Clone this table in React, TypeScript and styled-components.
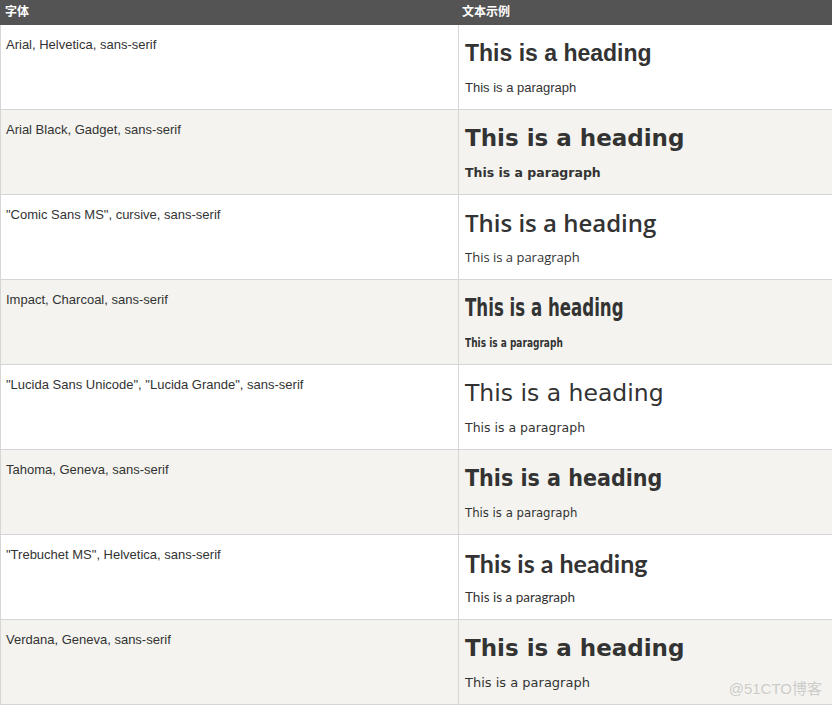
import React from 'react';
import styled, { createGlobalStyle } from 'styled-components';

type FontSample = {
  label: string;
  family: string;
  headSize: number;
  headWeight: number;
  paraSize: number;
  paraWeight: number;
  squeeze?: number;
};

// no Comic Sans / Impact / Tahoma here, so closest installed faces stand in
const SAMPLES: FontSample[] = [
  { label: 'Arial, Helvetica, sans-serif', family: '"Liberation Sans", Arial, sans-serif', headSize: 23, headWeight: 700, paraSize: 13, paraWeight: 400 },
  { label: 'Arial Black, Gadget, sans-serif', family: '"DejaVu Sans", sans-serif', headSize: 23, headWeight: 700, paraSize: 12.5, paraWeight: 700 },
  { label: '"Comic Sans MS", cursive, sans-serif', family: '"Open Sans", sans-serif', headSize: 24, headWeight: 600, paraSize: 13, paraWeight: 400 },
  { label: 'Impact, Charcoal, sans-serif', family: '"DejaVu Sans Condensed", sans-serif', headSize: 24, headWeight: 700, paraSize: 13, paraWeight: 700, squeeze: 0.77 },
  { label: '"Lucida Sans Unicode", "Lucida Grande", sans-serif', family: '"DejaVu Sans", sans-serif', headSize: 23.5, headWeight: 400, paraSize: 12.5, paraWeight: 400 },
  { label: 'Tahoma, Geneva, sans-serif', family: '"DejaVu Sans Condensed", "DejaVu Sans", sans-serif', headSize: 23, headWeight: 700, paraSize: 13, paraWeight: 400 },
  { label: '"Trebuchet MS", Helvetica, sans-serif', family: 'Lato, sans-serif', headSize: 25, headWeight: 700, paraSize: 13.5, paraWeight: 400 },
  { label: 'Verdana, Geneva, sans-serif', family: '"DejaVu Sans", sans-serif', headSize: 23, headWeight: 700, paraSize: 13, paraWeight: 400 },
];

const GlobalStyle = createGlobalStyle`
  html, body {
    margin: 0;
    padding: 0;
    background: #ffffff;
  }
  body {
    font-family: "Liberation Sans", Arial, "Noto Sans CJK SC", sans-serif;
    color: #333333;
  }
`;

const App = () => {
  return (
    <>
      <GlobalStyle />
      <Page>
        <HeaderRow>
          <HeaderCell>字体</HeaderCell>
          <HeaderCell $second>文本示例</HeaderCell>
        </HeaderRow>
        {SAMPLES.map((s, i) => (
          <Row key={s.label} $striped={i % 2 === 1}>
            <NameCell>{s.label}</NameCell>
            <SampleCell>
              <Heading
                $family={s.family}
                $size={s.headSize}
                $weight={s.headWeight}
                $squeeze={s.squeeze ?? 1}
              >
                This is a heading
              </Heading>
              <Paragraph
                $family={s.family}
                $size={s.paraSize}
                $weight={s.paraWeight}
                $squeeze={s.squeeze ?? 1}
              >
                This is a paragraph
              </Paragraph>
            </SampleCell>
          </Row>
        ))}
        <Watermark>@51CTO博客</Watermark>
      </Page>
    </>
  );
};

const Page = styled.div`
  position: relative;
  width: 832px;
  height: 706px;
  overflow: hidden;
`;

const HeaderRow = styled.div`
  display: grid;
  grid-template-columns: 458px 1fr;
  height: 25px;
  background-color: #545454;
`;

const HeaderCell = styled.div<{ $second?: boolean }>`
  padding-left: ${props => (props.$second ? 4 : 5)}px;
  padding-top: 5px;
  color: #ffffff;
  font-family: "Liberation Sans", "Noto Sans CJK SC", sans-serif;
  font-size: 12px;
  font-weight: 700;
  line-height: 15px;
`;

const Row = styled.div<{ $striped: boolean }>`
  display: grid;
  grid-template-columns: 459px 1fr;
  height: 85px;
  box-sizing: border-box;
  border-bottom: 1px solid #d6d6d6;
  background-color: ${props => (props.$striped ? '#f4f3ef' : '#ffffff')};
`;

const NameCell = styled.div`
  box-sizing: border-box;
  border-left: 1px solid #d6d6d6;
  border-right: 1px solid #d6d6d6;
  padding: 11px 5px 0 5px;
  font-family: "Liberation Sans", Arial, sans-serif;
  font-size: 13px;
  line-height: 17px;
  color: #333333;
`;

const SampleCell = styled.div`
  display: flex;
  flex-direction: column;
  align-items: flex-start;
  padding: 14px 6px 0 6px;
  color: #333333;
`;

const Heading = styled.h1<{ $family: string; $size: number; $weight: number; $squeeze: number }>`
  margin: 0 0 12px 0;
  font-family: ${props => props.$family};
  font-size: ${props => props.$size}px;
  font-weight: ${props => props.$weight};
  line-height: 28px;
  white-space: nowrap;
  transform: scaleX(${props => props.$squeeze});
  transform-origin: left center;
`;

const Paragraph = styled.p<{ $family: string; $size: number; $weight: number; $squeeze: number }>`
  margin: 0;
  font-family: ${props => props.$family};
  font-size: ${props => props.$size}px;
  font-weight: ${props => props.$weight};
  line-height: 17px;
  white-space: nowrap;
  transform: scaleX(${props => props.$squeeze});
  transform-origin: left center;
`;

const Watermark = styled.div`
  position: absolute;
  right: 10px;
  bottom: 8px;
  font-family: "Liberation Sans", "Noto Sans CJK SC", sans-serif;
  font-size: 15px;
  color: rgba(170, 170, 170, 0.55);
  pointer-events: none;
`;

export default App;
